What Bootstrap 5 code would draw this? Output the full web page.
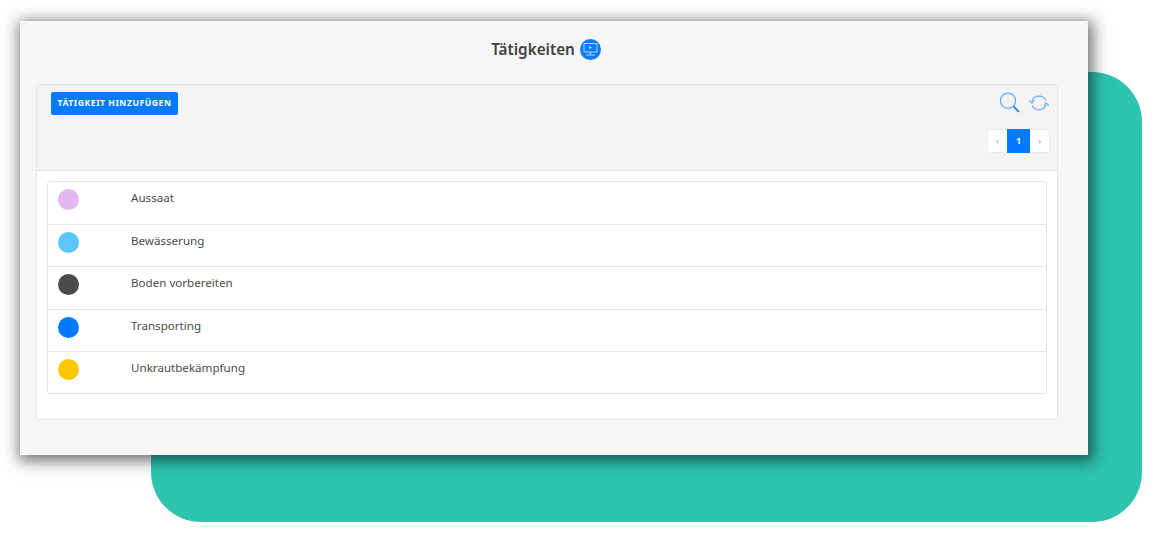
<!DOCTYPE html>
<html lang="de">
<head>
<meta charset="utf-8">
<title>Tätigkeiten</title>
<link href="https://cdn.jsdelivr.net/npm/bootstrap@5.3.0/dist/css/bootstrap.min.css" rel="stylesheet">
<style>
html,body{margin:0;height:542px;overflow:hidden;background:#fff;font-family:"Noto Sans",sans-serif;color:#444}
.stage-wrap{position:relative;width:1156px;height:542px;padding:21px 0 0 20px}
.teal-back{position:absolute;left:151px;top:72px;width:991px;height:450px;background:#2ec4b0;border-radius:50px}
.app-window{position:relative;width:1068px;height:434px;background:#f6f6f6;box-shadow:2px 3px 14px 3px rgba(0,0,0,.55);padding:0 16px}
.app-title{height:63px;padding:0 16px 6px 0;font-size:15.3px;font-weight:600;color:#3f3f3f;gap:5px}
.title-ico{width:21px;height:21px;display:block}
.act-card{height:335.5px;margin-right:14px;border:1px solid #e6e6e6;border-radius:3px;background:#fff}
.act-head{height:86px;background:#f4f4f4;border-bottom:1px solid #e4e4e4;padding:7px 7px 0 14px}
.add-btn{display:block;height:23px;width:127px;padding:0;background:#007bff;color:#fff;border:0;border-radius:2px;font-size:8.6px;font-weight:700;letter-spacing:.55px;line-height:23px;text-align:center}
.tool-ico{display:block}
.pager-box{height:24px;margin-top:15px;background:#fff;border:1px solid #ebebeb;border-radius:3px;font-size:9px;color:#999;width:63px}
.pager-box span{width:19.5px;text-align:center;line-height:22px}
.pager-box .pager-on{width:24px;background:#007bff;color:#fff;font-weight:700;height:24px;margin-top:-1px;line-height:24px}
.act-list{margin:10px 10px 0 10px;border:1px solid #e6e6e6;border-radius:3px;background:#fff}
.act-row{height:42.5px;border-bottom:1px solid #e6e6e6;padding-left:10px;font-size:11.6px;color:#4a4a4a}
.act-row:last-child{border-bottom:0;height:41px}
.dot{width:21px;height:21px;border-radius:50%;flex:none;margin-right:52px;margin-top:7px}
.act-name{margin-top:7px;line-height:18px}
</style>
</head>
<body>
<div class="stage-wrap">
  <div class="teal-back"></div>
  <div class="app-window">
    <div class="app-title d-flex align-items-center justify-content-center">
      <span>Tätigkeiten</span>
      <svg class="title-ico" viewBox="0 0 21 21"><circle cx="10.5" cy="10.5" r="10.5" fill="#0d7bf2"/><rect x="4" y="4.5" width="13" height="8.5" fill="none" stroke="#bcd9ff" stroke-width=".9"/><path d="M9.2 6.8l2.6 1.8-2.6 1.8z" fill="#bcd9ff"/><path d="M10.5 13v3M6 16h9" stroke="#bcd9ff" stroke-width=".9"/></svg>
    </div>
    <div class="act-card">
      <div class="act-head d-flex justify-content-between">
        <div><button class="add-btn" type="button">TÄTIGKEIT HINZUFÜGEN</button></div>
        <div class="d-flex flex-column align-items-end">
          <div class="d-flex align-items-center gap-2">
            <svg class="tool-ico" width="22" height="22" viewBox="0 0 22 22" fill="none"><circle cx="10" cy="8.8" r="7.6" stroke="#5ba8ff" stroke-width="1.2"/><path d="M15.6 14.4l5.4 5.6" stroke="#1b84f5" stroke-width="1.8"/></svg>
            <svg class="tool-ico" width="22" height="20" viewBox="0 0 22 20" fill="none" stroke="#6cb0ff" stroke-width="1.2"><path d="M4 8A7.5 7.5 0 0 1 18 8"/><path d="M18 12A7.5 7.5 0 0 1 4 12"/><path d="M1.2 7.5l2.8 2.5 2-2.8M20.8 12.5l-2.8-2.5-2 2.8"/></svg>
          </div>
          <div class="pager-box d-flex">
            <span>‹</span><span class="pager-on">1</span><span>›</span>
          </div>
        </div>
      </div>
      <div class="act-list">
        <div class="act-row d-flex"><span class="dot" style="background:#e3b7ef"></span><span class="act-name">Aussaat</span></div>
        <div class="act-row d-flex"><span class="dot" style="background:#5cc5fa"></span><span class="act-name">Bewässerung</span></div>
        <div class="act-row d-flex"><span class="dot" style="background:#4a4a4a"></span><span class="act-name">Boden vorbereiten</span></div>
        <div class="act-row d-flex"><span class="dot" style="background:#007bff"></span><span class="act-name">Transporting</span></div>
        <div class="act-row d-flex"><span class="dot" style="background:#ffc600"></span><span class="act-name">Unkrautbekämpfung</span></div>
      </div>
    </div>
  </div>
</div>
<script src="https://cdn.jsdelivr.net/npm/bootstrap@5.3.0/dist/js/bootstrap.bundle.min.js"></script>
</body>
</html>
